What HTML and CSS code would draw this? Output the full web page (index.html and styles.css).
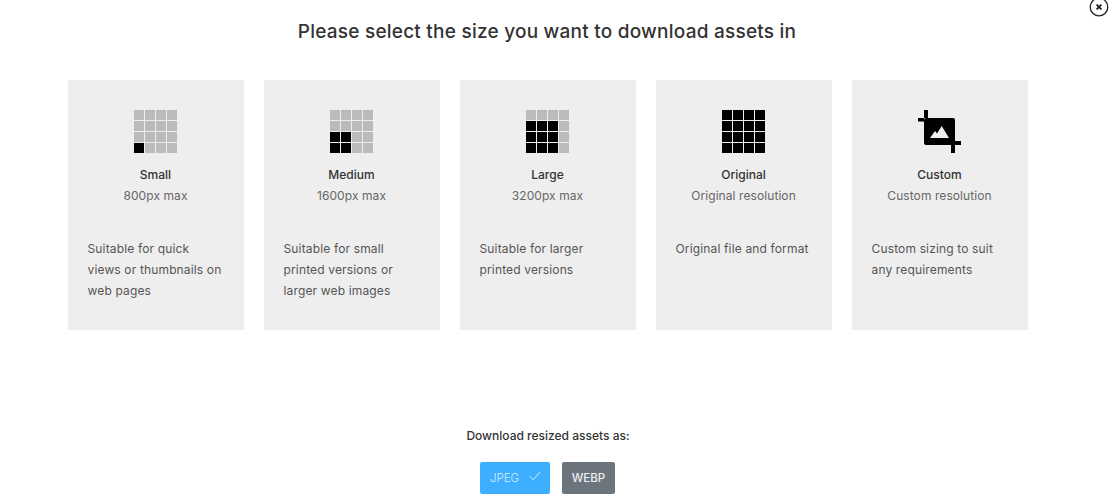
FILE: index.html
```html
<!DOCTYPE html>
<html lang="en">
<head>
    <meta charset="UTF-8">
    <title>Download assets</title>
    <link rel="stylesheet" href="styles.css">
</head>
<body>
    <button class="close" aria-label="Close">
        <svg width="20" height="20" viewBox="0 0 20 20">
            <circle cx="10" cy="10" r="8.800" fill="#fff" stroke="#222" stroke-width="1.300"/>
            <path d="M7.600 7.600l4.800 4.800M12.400 7.600l-4.800 4.800" stroke="#222" stroke-width="1.800" fill="none"/>
        </svg>
    </button>

    <h1>Please select the size you want to download assets in</h1>

    <div class="sizes">
        <div class="size">
            <div class="grid">
                <i></i><i></i><i></i><i></i>
                <i></i><i></i><i></i><i></i>
                <i></i><i></i><i></i><i></i>
                <i class="on"></i><i></i><i></i><i></i>
            </div>
            <h3>Small</h3>
            <p class="max">800px max</p>
            <p class="desc">Suitable for quick<br>views or thumbnails on<br>web pages</p>
        </div>
        <div class="size">
            <div class="grid">
                <i></i><i></i><i></i><i></i>
                <i></i><i></i><i></i><i></i>
                <i class="on"></i><i class="on"></i><i></i><i></i>
                <i class="on"></i><i class="on"></i><i></i><i></i>
            </div>
            <h3>Medium</h3>
            <p class="max">1600px max</p>
            <p class="desc">Suitable for small<br>printed versions or<br>larger web images</p>
        </div>
        <div class="size">
            <div class="grid">
                <i></i><i></i><i></i><i></i>
                <i class="on"></i><i class="on"></i><i class="on"></i><i></i>
                <i class="on"></i><i class="on"></i><i class="on"></i><i></i>
                <i class="on"></i><i class="on"></i><i class="on"></i><i></i>
            </div>
            <h3>Large</h3>
            <p class="max">3200px max</p>
            <p class="desc">Suitable for larger<br>printed versions</p>
        </div>
        <div class="size">
            <div class="grid">
                <i class="on"></i><i class="on"></i><i class="on"></i><i class="on"></i>
                <i class="on"></i><i class="on"></i><i class="on"></i><i class="on"></i>
                <i class="on"></i><i class="on"></i><i class="on"></i><i class="on"></i>
                <i class="on"></i><i class="on"></i><i class="on"></i><i class="on"></i>
            </div>
            <h3>Original</h3>
            <p class="max">Original resolution</p>
            <p class="desc">Original file and format</p>
        </div>
        <div class="size">
            <svg class="crop" width="43" height="43" viewBox="0 0 43 43">
                <path d="M6 0h4v8h-4zM0 8h6v3.500h-6zM37 31h6v4h-6zM33 35h4v8h-4z" fill="#000"/>
                <path d="M8 8h27a2 2 0 0 1 2 2v25h-29a2 2 0 0 1-2-2v-23a2 2 0 0 1 2-2z" fill="#000"/>
                <path d="M12 28l5-7 2 2.500 4.700-7.500 7.300 12z" fill="#eee"/>
            </svg>
            <h3>Custom</h3>
            <p class="max">Custom resolution</p>
            <p class="desc">Custom sizing to suit<br>any requirements</p>
        </div>
    </div>

    <p class="as">Download resized assets as:</p>
    <div class="formats">
        <button class="btn jpeg">JPEG
            <svg width="12" height="10" viewBox="0 0 12 10"><path d="M.8 5.200l3.400 3.400 7-7.600" fill="none" stroke="#dff1ff" stroke-width="1"/></svg>
        </button>
        <button class="btn webp">WEBP</button>
    </div>
</body>
</html>
```

FILE: styles.css
```css
body {
    margin: 0;
    height: 503px;
    overflow: hidden;
    background: #fff;
    font-family: Inter, "Open Sans", sans-serif;
    color: #333;
    position: relative;
}
.close {
    position: absolute;
    top: -3px;
    left: 1089px;
    width: 20px;
    height: 20px;
    padding: 0;
    border: none;
    background: none;
}
h1 {
    margin: 0;
    padding-top: 20px;
    height: 80px;
    box-sizing: border-box;
    width: 1094px;
    text-align: center;
    font-size: 19px;
    line-height: 23px;
    font-weight: 500;
    letter-spacing: .23px;
    color: #333;
}
.sizes {
    display: flex;
    gap: 20px;
    margin-left: 68px;
}
.size {
    width: 176px;
    height: 250px;
    box-sizing: border-box;
    padding: 30px 1px 0 0;
    background: #eee;
    text-align: center;
}
.grid {
    display: grid;
    grid-template-columns: repeat(4, 10px);
    grid-auto-rows: 10px;
    gap: 1px;
    width: 43px;
    margin: 0 auto;
}
.grid i {
    background: #bbb;
}
.grid i.on {
    background: #000;
}
.crop {
    display: block;
    margin: 0 auto;
}
.size h3 {
    margin: 11px 0 0;
    font-size: 12px;
    line-height: 21px;
    font-weight: 500;
    color: #333;
}
.max {
    margin: 0;
    font-size: 12px;
    line-height: 21px;
    color: #666;
    letter-spacing: .08px;
}
.desc {
    margin: 32px 0 0;
    padding-left: 19.500px;
    text-align: left;
    font-size: 12px;
    line-height: 21px;
    color: #555;
    letter-spacing: .15px;
}
.as {
    margin: 95px 0 0;
    width: 1096px;
    text-align: center;
    font-size: 12px;
    line-height: 21px;
    font-weight: 500;
    color: #333;
}
.formats {
    display: flex;
    justify-content: center;
    gap: 12px;
    width: 1095px;
    margin-top: 16px;
}
.btn {
    height: 32px;
    padding: 0;
    border: none;
    border-radius: 2px;
    font-family: inherit;
    font-size: 11.500px;
}
.jpeg {
    width: 70px;
    background: #3eaeff;
    color: #d8eeff;
    font-weight: 300;
    display: flex;
    align-items: center;
    gap: 10px;
    padding-left: 10px;
    box-sizing: border-box;
}
.jpeg svg {
    margin-top: -4px;
}
.webp {
    width: 53px;
    background: #6c757d;
    color: #eee;
    font-weight: 500;
}
```
